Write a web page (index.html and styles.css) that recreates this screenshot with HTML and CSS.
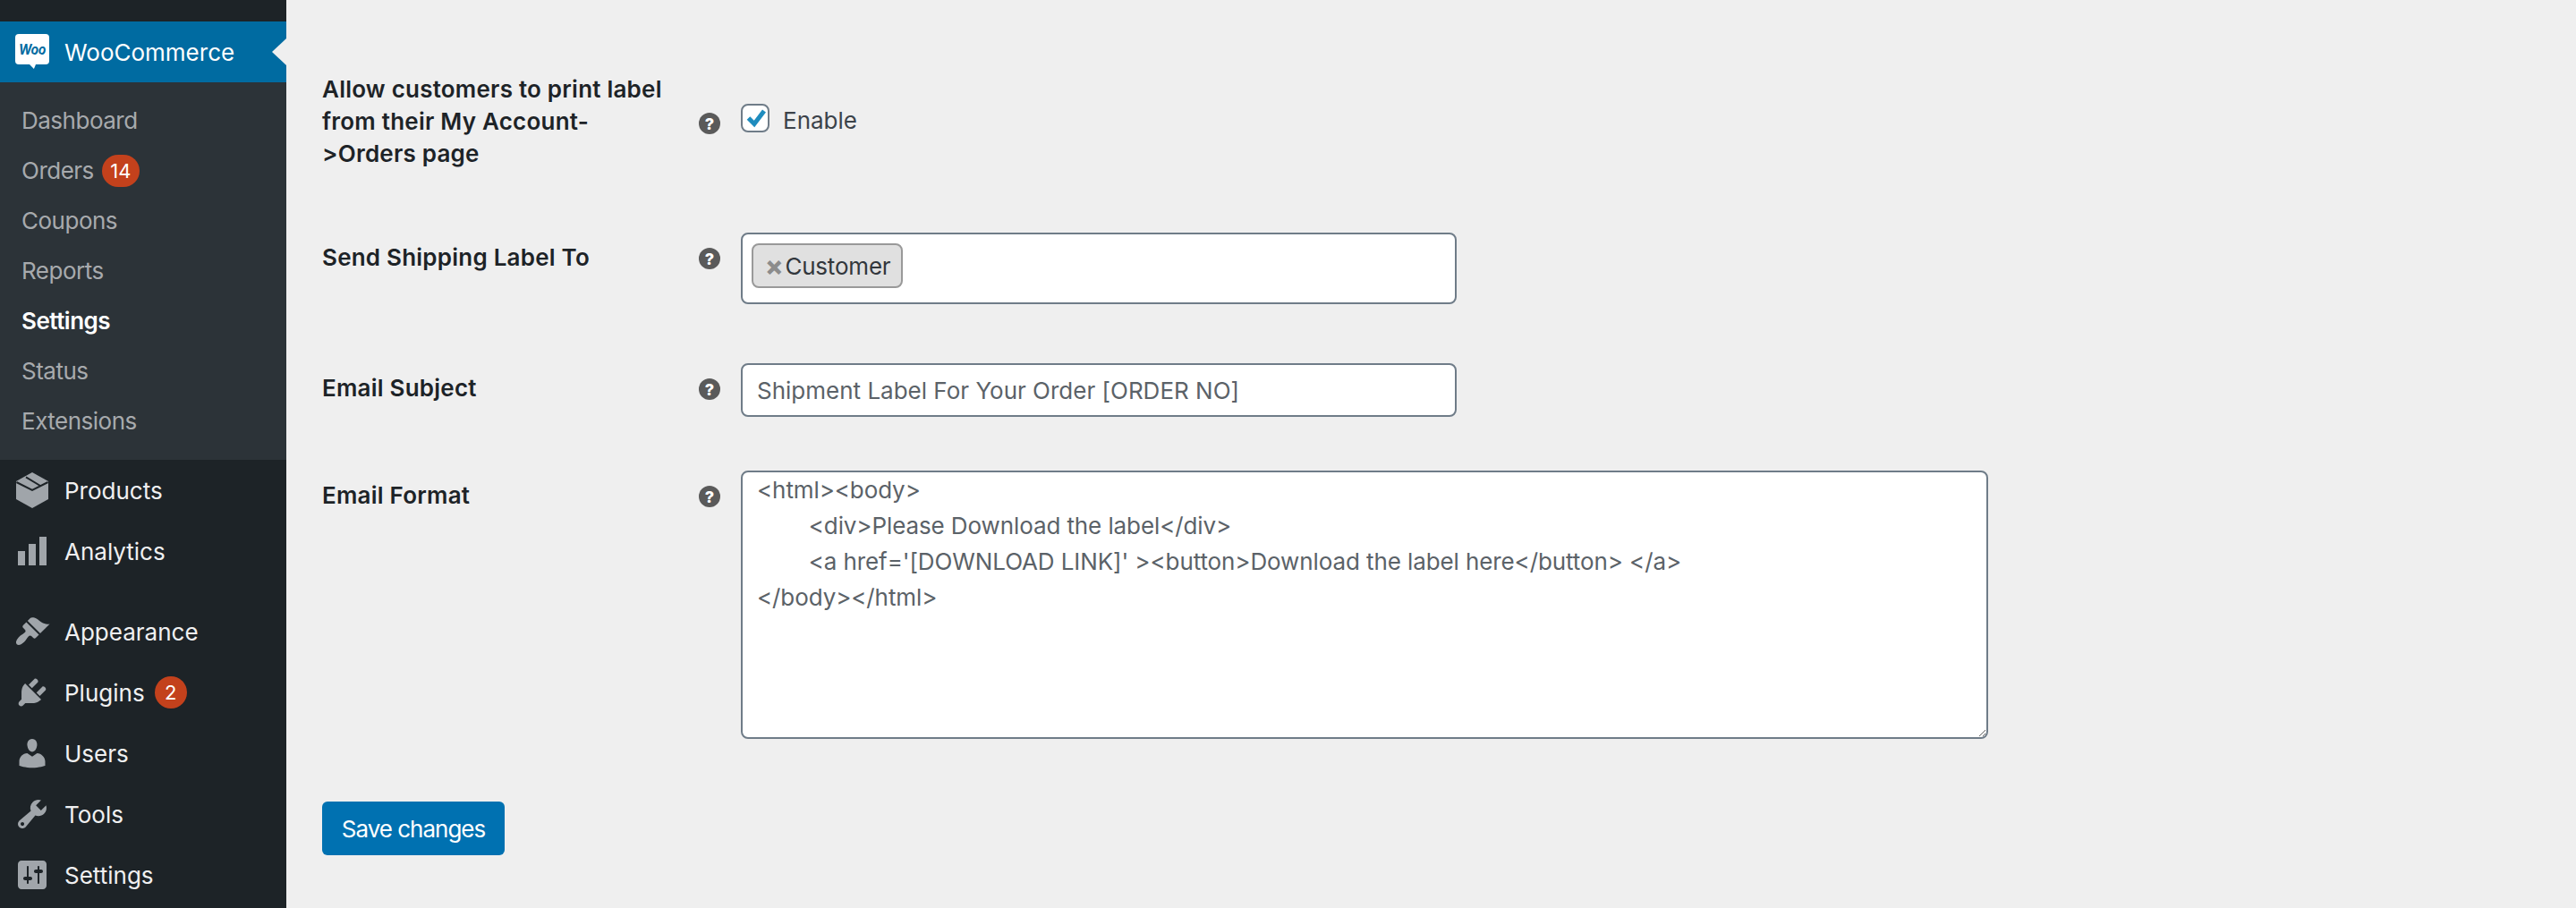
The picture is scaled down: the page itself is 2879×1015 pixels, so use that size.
FILE: index.html
```html
<!DOCTYPE html>
<html lang="en">
<head>
<meta charset="utf-8">
<title>WooCommerce Settings</title>
<link rel="stylesheet" href="styles.css">
</head>
<body>
<div class="layout">
  <nav class="sidebar">
    <div class="woo-head">
      <span class="woo-logo"><span class="woo-logo-text">Woo</span></span>
      <span class="woo-title">WooCommerce</span>
      <span class="woo-arrow"></span>
    </div>
    <ul class="submenu">
      <li class="sub-item">Dashboard</li>
      <li class="sub-item">Orders <span class="badge badge-sub">14</span></li>
      <li class="sub-item">Coupons</li>
      <li class="sub-item">Reports</li>
      <li class="sub-item sub-current">Settings</li>
      <li class="sub-item">Status</li>
      <li class="sub-item">Extensions</li>
    </ul>
    <ul class="menu">
      <li class="menu-item">
        <svg class="menu-icon" viewBox="0 0 20 20"><path d="M10 0l9 5v10l-9 5-9-5V5z"/><path class="box-line" d="M1.2 5.5 10 10l8.8-4.5M6.5 2.7l8 4.8"/></svg>
        <span>Products</span>
      </li>
      <li class="menu-item">
        <svg class="menu-icon" viewBox="0 0 20 20"><path d="M2 10h4v8H2zM8 6h4v12H8zM14 2h4v16h-4z"/></svg>
        <span>Analytics</span>
      </li>
      <li class="menu-item menu-gap">
        <svg class="menu-icon" viewBox="0 0 20 20"><path d="M14.48 11.06L7.41 3.99l1.5-1.5c.5-.56 2.3-.47 3.51.32 1.21.8 1.43 1.28 2.91 2.1 1.18.64 2.45 1.26 4.45.85zm-.71.71L6.7 4.7 4.93 6.47c-.39.39-.39 1.02 0 1.41l1.06 1.06c.39.39.39 1.03 0 1.42-.6.6-1.43 1.11-2.21 1.69-.35.26-.7.53-1.01.84C1.43 14.23.4 16.08 1.4 17.07c.99 1 2.84-.03 4.18-1.36.31-.31.58-.66.85-1.02.57-.78 1.08-1.61 1.69-2.21.39-.39 1.02-.39 1.41 0l1.06 1.06c.39.39 1.02.39 1.41 0z"/></svg>
        <span>Appearance</span>
      </li>
      <li class="menu-item">
        <svg class="menu-icon" viewBox="0 0 20 20"><path d="M13.11 4.36L9.87 7.6 8 5.73l3.24-3.24c.35-.34 1.05-.2 1.56.32.52.51.66 1.21.31 1.55zm-8 1.77l.91-1.12 9.01 9.01-1.19.84c-.71.71-2.63 1.16-3.82 1.16H6.14L4.9 17.26c-.59.59-1.54.59-2.12 0-.59-.58-.59-1.53 0-2.12l1.24-1.24v-3.88c0-1.13.4-3.19 1.09-3.89zm7.26 3.97l3.24-3.24c.34-.35 1.04-.21 1.55.31.52.51.66 1.21.31 1.55l-3.24 3.25z"/></svg>
        <span>Plugins</span> <span class="badge badge-menu">2</span>
      </li>
      <li class="menu-item">
        <svg class="menu-icon" viewBox="0 0 20 20"><path d="M10 9.25c-2.27 0-2.73-3.44-2.73-3.44C7 4.02 7.82 2 9.97 2c2.16 0 2.98 2.02 2.71 3.81 0 0-.41 3.44-2.68 3.44zm0 2.57L12.72 10c2.39 0 4.52 2.33 4.52 4.53v2.49s-3.65 1.13-7.24 1.13c-3.65 0-7.24-1.13-7.24-1.13v-2.49c0-2.25 1.94-4.48 4.47-4.48z"/></svg>
        <span>Users</span>
      </li>
      <li class="menu-item">
        <svg class="menu-icon" viewBox="0 0 20 20"><path d="M16.68 9.77c-1.34 1.34-3.3 1.67-4.95.99l-5.41 6.52c-.99.99-2.59.99-3.58 0s-.99-2.59 0-3.57l6.52-5.42c-.68-1.65-.35-3.61.99-4.95 1.28-1.28 3.12-1.62 4.72-1.06l-2.89 2.89 2.82 2.82 2.86-2.87c.53 1.58.18 3.39-1.08 4.65zM3.81 16.21c.4.39 1.04.39 1.43 0 .4-.4.4-1.04 0-1.43-.39-.4-1.03-.4-1.43 0-.39.39-.39 1.03 0 1.43z"/></svg>
        <span>Tools</span>
      </li>
      <li class="menu-item">
        <svg class="menu-icon" viewBox="0 0 20 20"><path d="M18 16V4c0-1.1-.9-2-2-2H4c-1.1 0-2 .9-2 2v12c0 1.1.9 2 2 2h12c1.1 0 2-.9 2-2zM8 11h1c.55 0 1 .45 1 1s-.45 1-1 1H8v1.5c0 .28-.22.5-.5.5s-.5-.22-.5-.5V13H6c-.55 0-1-.45-1-1s.45-1 1-1h1V5.5c0-.28.22-.5.5-.5s.5.22.5.5V11zm5-2h-1c-.55 0-1-.45-1-1s.45-1 1-1h1V5.5c0-.28.22-.5.5-.5s.5.22.5.5V7h1c.55 0 1 .45 1 1s-.45 1-1 1h-1v5.5c0 .28-.22.5-.5.5s-.5-.22-.5-.5V9z"/></svg>
        <span>Settings</span>
      </li>
    </ul>
  </nav>
  <main class="content">
    <form class="settings">
      <div class="row row-check">
        <div class="label">Allow customers to print label from their My Account-&gt;Orders page</div>
        <span class="help">?</span>
        <div class="field check-field">
          <span class="checkbox">
            <svg viewBox="0 0 28 28" width="28" height="28"><path d="M6.5 14l6.5 6.5L24 6" fill="none" stroke="#1e8cbe" stroke-width="5"/></svg>
          </span>
          <span class="check-label">Enable</span>
        </div>
      </div>
      <div class="row row-send">
        <div class="label">Send Shipping Label To</div>
        <span class="help">?</span>
        <div class="field multi"><span class="tag"><span class="tag-x">×</span>Customer</span></div>
      </div>
      <div class="row row-subject">
        <div class="label">Email Subject</div>
        <span class="help">?</span>
        <div class="field"><input class="text-input" type="text" value="Shipment Label For Your Order [ORDER NO]"></div>
      </div>
      <div class="row row-format">
        <div class="label">Email Format</div>
        <span class="help">?</span>
        <div class="field"><textarea class="text-area">&lt;html&gt;&lt;body&gt;
	&lt;div&gt;Please Download the label&lt;/div&gt;
	&lt;a href='[DOWNLOAD LINK]' &gt;&lt;button&gt;Download the label here&lt;/button&gt; &lt;/a&gt;
&lt;/body&gt;&lt;/html&gt;</textarea></div>
      </div>
      <button class="save" type="button">Save changes</button>
    </form>
  </main>
</div>
</body>
</html>
```
FILE: styles.css
```css
* { box-sizing: border-box; }
html, body { margin: 0; padding: 0; height: 100%; }
body {
  background: #efefef;
  color: #1d2327;
  font-family: Inter, "Liberation Sans", sans-serif;
  font-size: 26px;
  font-variant-ligatures: none;
  font-feature-settings: "calt" 0;
  overflow: hidden;
}
.layout { display: flex; height: 1015px; overflow: hidden; }
.sidebar {
  width: 320px;
  flex: none;
  background: #1d2327;
  padding-top: 24px;
  color: #f0f0f1;
}
.woo-head {
  position: relative;
  display: flex;
  align-items: center;
  height: 68px;
  padding-left: 17px;
  background: #006ba1;
  color: #fff;
  overflow: hidden;
}
.woo-logo {
  position: relative;
  display: flex;
  align-items: center;
  justify-content: center;
  flex: none;
  width: 38px;
  height: 34px;
  margin-top: -6px;
  background: #fff;
  border-radius: 4px;
}
.woo-logo::after {
  content: "";
  position: absolute;
  left: 16px;
  top: 34px;
  width: 7px;
  height: 5px;
  background: #fff;
  clip-path: polygon(0 0, 100% 0, 70% 100%);
}
.woo-logo-text {
  font-size: 14px;
  line-height: 14px;
  font-style: italic;
  font-weight: 700;
  letter-spacing: -0.4px;
  color: #006ba1;
  transform: scaleY(1.15);
}
.woo-title { margin-left: 17px; }
.woo-arrow {
  position: absolute;
  right: -2px;
  top: 17px;
  border: 17px solid transparent;
  border-left-width: 0;
  border-right: 18px solid #efefef;
}
ul { list-style: none; margin: 0; padding: 0; }
.submenu { background: #2c3338; padding: 14px 0 16px; }
.sub-item {
  display: flex;
  align-items: center;
  gap: 9px;
  height: 56px;
  padding-left: 24px;
  color: #a7aaad;
  letter-spacing: -0.5px;
}
.sub-current { color: #fff; font-weight: 600; }
.badge {
  display: inline-flex;
  align-items: center;
  justify-content: center;
  height: 36px;
  border-radius: 18px;
  background: #c3411c;
  color: #fff;
  font-size: 22px;
  letter-spacing: 0;
}
.badge-sub { width: 42px; margin-top: 2px; }
.badge-menu { width: 36px; margin-left: 11px; }
.menu-item {
  display: flex;
  align-items: center;
  height: 68px;
  padding-left: 16px;
  color: #f0f0f1;
}
.menu-gap { margin-top: 22px; }
.menu-icon { width: 40px; height: 40px; fill: #a0a5aa; margin-right: 16px; flex: none; }
.box-line { fill: none; stroke: #1d2327; stroke-width: 1; }
.content { flex: 1; padding-left: 40px; }
.settings { display: flex; flex-direction: column; align-items: flex-start; }
.row {
  display: grid;
  grid-template-columns: 421px 47px auto;
  align-items: start;
}
.row-check { margin-top: 72px; }
.row-send { margin-top: 70px; }
.row-subject { margin-top: 66px; }
.row-format { margin-top: 60px; }
.label {
  font-weight: 600;
  line-height: 36px;
  padding-top: 10px;
  padding-right: 35px;
  color: #1d2327;
  letter-spacing: 0.22px;
}
.help {
  display: flex;
  align-items: center;
  justify-content: center;
  width: 24px;
  height: 24px;
  margin-top: 17px;
  border-radius: 50%;
  background: #5a5a5a;
  color: #fff;
  font-size: 18px;
  font-weight: 800;
}
.row-check .help { margin-top: 54px; }
.check-field {
  display: flex;
  align-items: center;
  height: 32px;
  margin-top: 44px;
  color: #3c434a;
}
.checkbox {
  display: flex;
  align-items: center;
  justify-content: center;
  width: 32px;
  height: 32px;
  border: 2px solid #6f7c88;
  border-radius: 8px;
  background: #fff;
}
.check-label { margin-left: 15px; position: relative; top: 2px; }
.multi {
  width: 800px;
  height: 80px;
  padding: 10px;
  background: #fff;
  border: 2px solid #6f7c88;
  border-radius: 8px;
}
.tag {
  display: inline-flex;
  align-items: center;
  height: 50px;
  padding: 0 12px 0 13px;
  background: #e0e0e0;
  border: 2px solid #999;
  border-radius: 8px;
  color: #32373c;
  letter-spacing: -0.2px;
}
.tag-x { color: #8c8c8c; font-size: 30px; line-height: 30px; font-weight: 800; margin-right: 2px; }
.text-input, .text-area {
  display: block;
  font: inherit;
  font-variant-ligatures: none;
  font-feature-settings: "calt" 0;
  color: #5b6268;
  background: #fff;
  border: 2px solid #6f7c88;
  border-radius: 8px;
  outline: none;
}
.text-input { width: 800px; height: 60px; padding: 0 16px; }
.text-area {
  width: 1394px;
  height: 300px;
  padding: 0 16px;
  line-height: 40px;
  tab-size: 8;
  margin: 0;
  letter-spacing: -0.1px;
}
.save {
  margin-top: 70px;
  width: 204px;
  height: 60px;
  padding: 0;
  background: #0071b1;
  border: 0;
  border-radius: 6px;
  color: #fff;
  font: inherit;
  letter-spacing: -1px;
}
```
